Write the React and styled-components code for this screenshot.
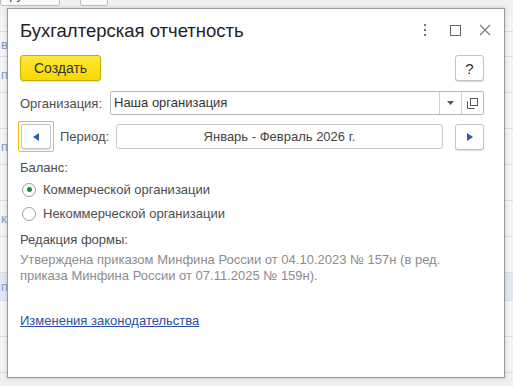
import styled, { createGlobalStyle } from "styled-components";

const GlobalStyle = createGlobalStyle`
    html, body {
        margin: 0;
        padding: 0;
        background: #f0f0f0;
        font-family: "Liberation Sans", Arial, sans-serif;
    }
`;

const Page = styled.div`
    position: relative;
    width: 513px;
    height: 386px;
    overflow: hidden;
    background: #f0f0f0;
`;

const BackToolbar = styled.div`
    display: flex;
    gap: 20px;
    height: 7px;
    overflow: hidden;
`;

const BackButton = styled.div`
    flex: none;
    width: ${(p) => p.$w}px;
    height: 24px;
    margin-top: -18px;
    border: 1px solid #bdbdbd;
    border-radius: 2px;
    background: #fafafa;
    font-size: 13px;
    line-height: 24px;
    color: #444;
    padding-left: 2px;
    box-sizing: border-box;
`;

const BackList = styled.div`
    display: flex;
    flex-direction: column;
    margin-top: 9px;
`;

const BackRow = styled.div`
    height: ${(p) => p.$h}px;
    border-bottom: 1px solid #dcdcdc;
    background: ${(p) => (p.$active ? "#dfe8f5" : "#f4f4f4")};
    font-size: 13px;
    line-height: ${(p) => p.$h}px;
    color: #7a9cc9;
    padding-left: 1px;
    box-sizing: border-box;
`;

const Dialog = styled.div`
    position: absolute;
    left: 7px;
    top: 8px;
    width: 498px;
    height: 370px;
    box-sizing: border-box;
    background: #fff;
    border: 1px solid #9a9a9a;
    box-shadow: 0 0 4px rgba(0, 0, 0, 0.18);
    display: flex;
    flex-direction: column;
`;

const Header = styled.div`
    display: flex;
    align-items: center;
    height: 38px;
    padding: 2px 11px 0 12px;
`;

const Title = styled.div`
    flex: 1;
    font-size: 18.5px;
    color: #222;
    padding-top: 1px;
`;

const HeaderIcons = styled.div`
    display: flex;
    align-items: center;
    gap: 14px;
`;

const IconBox = styled.div`
    width: 16px;
    height: 16px;
    display: flex;
    align-items: center;
    justify-content: center;
`;

const Body = styled.div`
    display: flex;
    flex-direction: column;
    padding: 6px 20px 0 12px;
    font-size: 13px;
    color: #4d4d4d;
`;

const ButtonBar = styled.div`
    display: flex;
    justify-content: space-between;
    align-items: center;
`;

const PrimaryButton = styled.button`
    width: 81px;
    height: 26px;
    box-sizing: border-box;
    border: 1px solid #c6ab00;
    border-radius: 3px;
    background: linear-gradient(#ffe83a, #f7d800);
    font-family: inherit;
    font-size: 14px;
    color: #333;
    padding: 0;
    box-shadow: 0 1px 1px rgba(0, 0, 0, 0.12);
`;

const PlainButton = styled.button`
    width: ${(p) => p.$w || 29}px;
    height: ${(p) => p.$h || 26}px;
    box-sizing: border-box;
    border: 1px solid #c2c2c2;
    border-radius: 3px;
    background: #fff;
    box-shadow: 0 1px 1px rgba(0, 0, 0, 0.15);
    font-family: inherit;
    font-size: 15px;
    color: #333;
    padding: 0;
    display: flex;
    align-items: center;
    justify-content: center;
`;

const FieldRow = styled.div`
    display: flex;
    align-items: center;
    margin-top: ${(p) => p.$mt}px;
`;

const Label = styled.div`
    flex: none;
    box-sizing: border-box;
    width: ${(p) => p.$w}px;
    padding-left: ${(p) => p.$pl || 0}px;
    color: #4d4d4d;
`;

const Input = styled.div`
    flex: 1;
    height: 24px;
    box-sizing: border-box;
    border: 1px solid #b9b9b9;
    border-radius: 2px;
    display: flex;
    align-items: stretch;
    color: #333;
`;

const InputText = styled.div`
    flex: 1;
    padding-left: 3px;
    line-height: 22px;
    font-size: 13px;
`;

const InputBtn = styled.div`
    width: 21px;
    border-left: 1px solid #d0d0d0;
    display: flex;
    align-items: center;
    justify-content: center;
`;

const FocusRing = styled.div`
    flex: none;
    padding: 2px;
    margin-left: -2px;
    border: 1px solid #f2c200;
    border-radius: 2px;
`;

const PeriodField = styled.div`
    flex: none;
    width: 327px;
    height: 25px;
    box-sizing: border-box;
    border: 1px solid #c9c9c9;
    border-radius: 3px;
    text-align: center;
    line-height: 23px;
    font-size: 13px;
    color: #444;
    margin-right: 12px;
`;

const Section = styled.div`
    margin-top: ${(p) => p.$mt}px;
    color: #4d4d4d;
    line-height: 15px;
`;

const RadioRow = styled.label`
    display: flex;
    align-items: center;
    gap: 7px;
    margin-top: ${(p) => p.$mt}px;
    color: #4d4d4d;
    line-height: 15px;
`;

const RadioCircle = styled.span`
    width: 14px;
    height: 14px;
    box-sizing: border-box;
    border: 1px solid #9a9a9a;
    border-radius: 50%;
    margin-left: 2px;
    display: flex;
    align-items: center;
    justify-content: center;
    &::after {
        content: "";
        width: 5px;
        height: 5px;
        border-radius: 50%;
        background: ${(p) => (p.$checked ? "#168d46" : "transparent")};
    }
`;

const Note = styled.div`
    margin-top: 5px;
    color: #8c8c8c;
    line-height: 16px;
`;

const Link = styled.a`
    margin-top: 29px;
    color: #2c4fa3;
    text-decoration: underline;
    line-height: 15px;
    align-self: flex-start;
`;

const Tri = ({ dir }) => (
    <svg width="7" height="8" viewBox="0 0 7 8">
        <path
            d={dir === "left" ? "M6 0 L6 8 L0 4 Z" : "M1 0 L1 8 L7 4 Z"}
            fill="#2860b0"
        />
    </svg>
);

export default function App() {
    const rows = [
        { h: 16, t: "" },
        { h: 25, t: "в" },
        { h: 36, t: "п" },
        { h: 36, t: "" },
        { h: 36, t: "п" },
        { h: 36, t: "" },
        { h: 36, t: "к" },
        { h: 36, t: "" },
        { h: 28, t: "п", active: true },
        { h: 36, t: "" },
        { h: 36, t: "" },
    ];

    return (
        <Page>
            <GlobalStyle />
            <BackToolbar>
                <BackButton $w={60}>Группа</BackButton>
                <BackButton $w={28}>б</BackButton>
            </BackToolbar>
            <BackList>
                {rows.map((r, i) => (
                    <BackRow key={i} $h={r.h} $active={r.active}>
                        {r.t}
                    </BackRow>
                ))}
            </BackList>

            <Dialog>
                <Header>
                    <Title>Бухгалтерская отчетность</Title>
                    <HeaderIcons>
                        <IconBox>
                            <svg width="4" height="12" viewBox="0 0 4 12">
                                <rect x="1" y="0" width="2" height="2" fill="#777" />
                                <rect x="1" y="5" width="2" height="2" fill="#777" />
                                <rect x="1" y="10" width="2" height="2" fill="#777" />
                            </svg>
                        </IconBox>
                        <IconBox>
                            <svg width="11" height="11" viewBox="0 0 11 11">
                                <rect x="0.5" y="0.5" width="10" height="10" fill="none" stroke="#666" />
                            </svg>
                        </IconBox>
                        <IconBox>
                            <svg width="12" height="12" viewBox="0 0 12 12">
                                <path d="M1 1 L11 11 M11 1 L1 11" stroke="#777" strokeWidth="1.1" />
                            </svg>
                        </IconBox>
                    </HeaderIcons>
                </Header>

                <Body>
                    <ButtonBar>
                        <PrimaryButton>Создать</PrimaryButton>
                        <PlainButton>?</PlainButton>
                    </ButtonBar>

                    <FieldRow $mt={10}>
                        <Label $w={90}>Организация:</Label>
                        <Input>
                            <InputText>Наша организация</InputText>
                            <InputBtn>
                                <svg width="7" height="4" viewBox="0 0 7 4">
                                    <path d="M0 0 L7 0 L3.5 4 Z" fill="#555" />
                                </svg>
                            </InputBtn>
                            <InputBtn>
                                <svg width="11" height="11" viewBox="0 0 11 11">
                                    <rect x="3.5" y="0.5" width="7" height="7" fill="#fff" stroke="#555" />
                                    <path d="M0.5 3.5 V10.5 H7.5" fill="none" stroke="#555" />
                                </svg>
                            </InputBtn>
                        </Input>
                    </FieldRow>

                    <FieldRow $mt={6}>
                        <FocusRing>
                            <PlainButton $w={30} $h={25}>
                                <Tri dir="left" />
                            </PlainButton>
                        </FocusRing>
                        <Label $w={62} $pl={6}>
                            Период:
                        </Label>
                        <PeriodField>Январь - Февраль 2026 г.</PeriodField>
                        <PlainButton $w={29} $h={26}>
                            <Tri dir="right" />
                        </PlainButton>
                    </FieldRow>

                    <Section $mt={8}>Баланс:</Section>
                    <RadioRow $mt={7}>
                        <RadioCircle $checked />
                        Коммерческой организации
                    </RadioRow>
                    <RadioRow $mt={9}>
                        <RadioCircle />
                        Некоммерческой организации
                    </RadioRow>

                    <Section $mt={11}>Редакция формы:</Section>
                    <Note>
                        Утверждена приказом Минфина России от 04.10.2023 № 157н (в ред.
                        <br />
                        приказа Минфина России от 07.11.2025 № 159н).
                    </Note>

                    <Link href="#">Изменения законодательства</Link>
                </Body>
            </Dialog>
        </Page>
    );
}
